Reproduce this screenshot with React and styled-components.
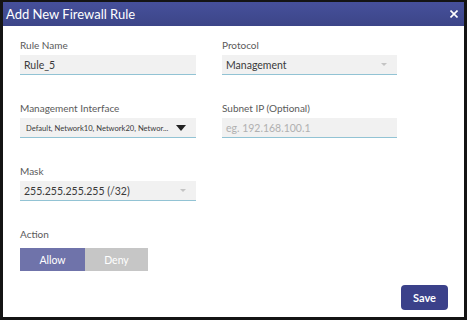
import styled, { createGlobalStyle } from 'styled-components';

const GlobalStyle = createGlobalStyle`
    html, body {
        margin: 0;
        padding: 0;
        background: #ffffff;
    }
    * {
        box-sizing: border-box;
    }
`;

const Dialog = styled.div`
    width: 467px;
    height: 320px;
    border: 3px solid #141414;
    border-top-width: 2px;
    display: flex;
    flex-direction: column;
    background: #ffffff;
    font-family: Lato, "Open Sans", sans-serif;
`;

const Header = styled.div`
    height: 24px;
    display: flex;
    align-items: center;
    justify-content: space-between;
    padding: 0 5px 0 3px;
    background: linear-gradient(180deg, #46509b 0%, #3c4588 100%);
    color: #ffffff;
    font-size: 13px;
`;

const Close = styled.button`
    border: none;
    background: none;
    padding: 0;
    width: 10px;
    height: 10px;
    display: flex;
    align-items: center;
    justify-content: center;
    cursor: pointer;
`;

const Body = styled.div`
    flex: 1;
    display: flex;
    flex-direction: column;
    padding: 12px 16px 7px 17px;
`;

const Form = styled.div`
    display: grid;
    grid-template-columns: 176px 175px;
    column-gap: 26px;
    row-gap: 26px;
`;

const Field = styled.div`
    display: flex;
    flex-direction: column;
`;

const Label = styled.label`
    height: 14px;
    line-height: 14px;
    font-size: 10px;
    color: #5a5a5a;
    margin-bottom: ${p => (p.$wide ? 7 : 3)}px;
`;

const Box = styled.div`
    height: 20px;
    display: flex;
    align-items: center;
    padding: 0 4px 0 ${p => (p.$small ? 6 : 4)}px;
    background: #f1f1f1;
    border-bottom: 1.5px solid #92c3d4;
    font-size: ${p => (p.$small ? 7.6 : 10.5)}px;
    color: ${p => (p.$placeholder ? '#b0b0b0' : '#3a3a3a')};
`;

const Value = styled.span`
    flex: 1;
    white-space: nowrap;
`;

const Caret = styled.span`
    width: 0;
    height: 0;
    margin-right: ${p => (p.$dark ? 6 : 6)}px;
    border-left: ${p => (p.$dark ? 5 : 3.5)}px solid transparent;
    border-right: ${p => (p.$dark ? 5 : 3.5)}px solid transparent;
    border-top: ${p => (p.$dark ? 6 : 3)}px solid ${p => (p.$dark ? '#222' : '#c4c4c4')};
`;

const Toggle = styled.div`
    display: flex;
`;

const ToggleButton = styled.button`
    width: ${p => p.$w}px;
    height: 23px;
    border: none;
    padding: 0;
    font-family: inherit;
    font-size: 10.5px;
    color: #ffffff;
    background: ${p => (p.$active ? '#6f73aa' : '#c6c6c6')};
`;

const Footer = styled.div`
    margin-top: auto;
    display: flex;
    justify-content: flex-end;
`;

const SaveButton = styled.button`
    width: 47px;
    height: 25px;
    border: none;
    border-radius: 4px;
    background: #3b418a;
    color: #ffffff;
    font-family: inherit;
    font-size: 11px;
    font-weight: 700;
`;

export default function App() {
    return (
        <>
            <GlobalStyle />
            <Dialog>
                <Header>
                    <span>Add New Firewall Rule</span>
                    <Close aria-label="close">
                        <svg width="8" height="8" viewBox="0 0 8 8">
                            <path d="M0.5 0.5 L7.5 7.5 M7.5 0.5 L0.5 7.5" stroke="#fff" strokeWidth="1.6" />
                        </svg>
                    </Close>
                </Header>
                <Body>
                    <Form>
                        <Field>
                            <Label>Rule Name</Label>
                            <Box><Value>Rule_5</Value></Box>
                        </Field>
                        <Field>
                            <Label>Protocol</Label>
                            <Box><Value>Management</Value><Caret /></Box>
                        </Field>
                        <Field>
                            <Label>Management Interface</Label>
                            <Box $small><Value>Default, Network10, Network20, Networ...</Value><Caret $dark /></Box>
                        </Field>
                        <Field>
                            <Label>Subnet IP (Optional)</Label>
                            <Box $placeholder><Value>eg. 192.168.100.1</Value></Box>
                        </Field>
                        <Field>
                            <Label>Mask</Label>
                            <Box><Value>255.255.255.255 (/32)</Value><Caret /></Box>
                        </Field>
                        <div />
                        <Field>
                            <Label $wide>Action</Label>
                            <Toggle>
                                <ToggleButton $active $w={65}>Allow</ToggleButton>
                                <ToggleButton $w={63}>Deny</ToggleButton>
                            </Toggle>
                        </Field>
                    </Form>
                    <Footer>
                        <SaveButton>Save</SaveButton>
                    </Footer>
                </Body>
            </Dialog>
        </>
    );
}
